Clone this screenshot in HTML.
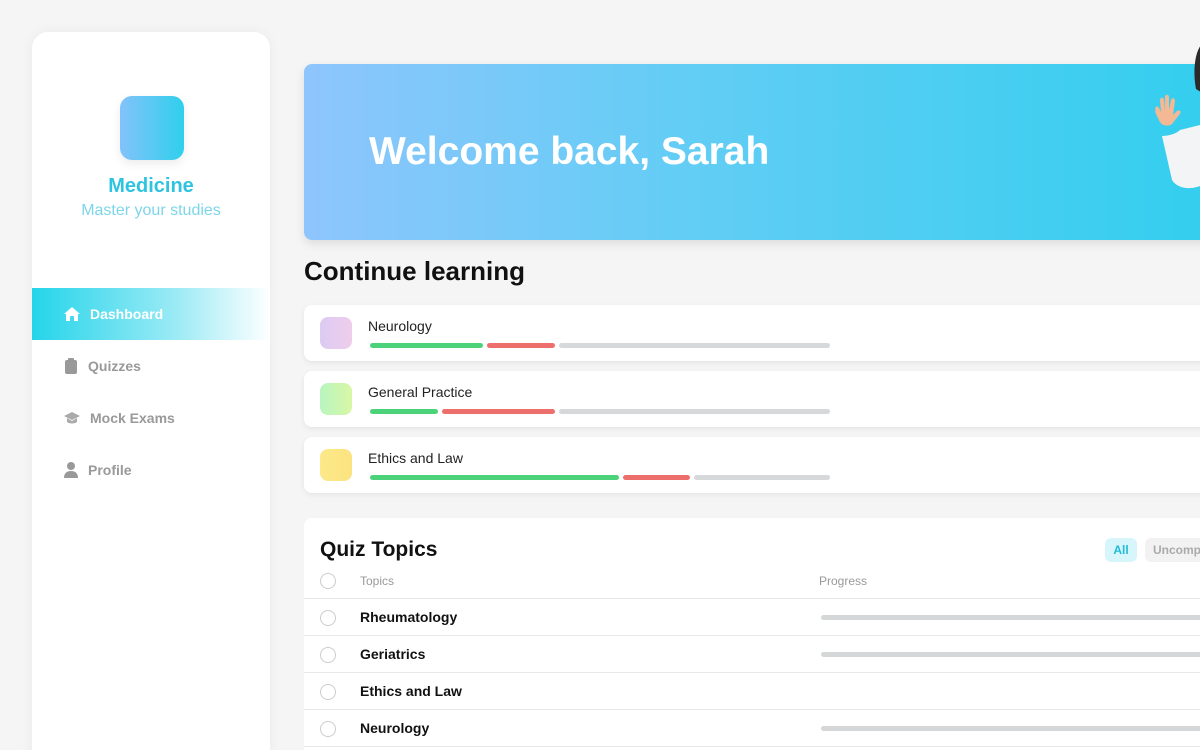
<!DOCTYPE html>
<html><head><style>
*{margin:0;padding:0;box-sizing:border-box}
html,body{width:1200px;height:750px;overflow:hidden}
body{background:#f5f5f5;font-family:"Liberation Sans",sans-serif;position:relative}
.sb{position:absolute;left:32px;top:32px;width:238px;height:740px;background:#fff;border-radius:16px;box-shadow:0 0 12px rgba(0,0,0,.05)}
.logo{position:absolute;left:88px;top:64px;width:64px;height:64px;border-radius:12px;background:linear-gradient(90deg,#83c2fa,#2fd0ec);box-shadow:0 4px 10px rgba(0,0,0,.08)}
.t1{position:absolute;left:0;width:238px;top:143px;text-align:center;color:#2ec4e0;font-weight:bold;font-size:20px}
.t2{position:absolute;left:0;width:238px;top:170px;text-align:center;color:#7dd6e8;font-size:16px}
.nav{position:absolute;left:0;width:238px;height:52px;display:flex;align-items:center;padding-left:32px;font-size:14px;font-weight:bold;color:#999}
.nav svg{margin-right:10px}
.act{background:linear-gradient(90deg,#25d4ea,#9aeaf5 60%,#fff);color:#fff}
.ban{position:absolute;left:304px;top:64px;width:920px;height:176px;border-radius:8px;background:linear-gradient(90deg,#8ec5fc,#64cdf5 40%,#32ceee);box-shadow:0 4px 10px rgba(0,0,0,.1);overflow:visible}
.ban h1{position:absolute;left:65px;top:66px;color:#fff;font-size:39px;font-weight:bold}
h2{position:absolute;left:304px;top:256px;font-size:26px;font-weight:bold;color:#111}
.card{position:absolute;left:304px;width:920px;height:56px;background:#fff;border-radius:8px;box-shadow:0 2px 6px rgba(0,0,0,.07)}
.ic{position:absolute;left:16px;top:12px;width:32px;height:32px;border-radius:8px}
.cn{position:absolute;left:64px;top:13px;font-size:14px;color:#222}
.bar{position:absolute;top:38px;height:5px;border-radius:3px}
.q{position:absolute;left:304px;top:518px;width:920px;height:260px;background:#fff;border-radius:8px}
.q h3{position:absolute;left:16px;top:20px;font-size:21px;font-weight:bold;color:#111}
.row{position:absolute;left:0;width:920px;height:37px;border-bottom:1px solid #e8e8e8}
.rad{position:absolute;left:16px;top:11px;width:16px;height:16px;border:1.5px solid #ccc;border-radius:50%}
.rn{position:absolute;left:56px;top:10px;font-size:14px;font-weight:bold;color:#111}
.pb{position:absolute;left:517px;top:16px;width:400px;height:5px;border-radius:3px;background:#d4d6d8}
</style></head><body>
<div class="sb">
<div class="logo"></div>
<div class="t1">Medicine</div>
<div class="t2">Master your studies</div>
<div class="nav act" style="top:256px"><svg width="16" height="14" viewBox="0 0 16 14"><path d="M8 0L0 7h2v7h4V9h4v5h4V7h2z" fill="#fff"/></svg>Dashboard</div>
<div class="nav" style="top:308px"><svg width="14" height="16" viewBox="0 0 14 16"><rect x="1" y="2" width="12" height="14" rx="2" fill="#999"/><rect x="4" y="0" width="6" height="4" rx="1" fill="#999"/></svg>Quizzes</div>
<div class="nav" style="top:360px"><svg width="16" height="14" viewBox="0 0 16 14"><path d="M8 1L0 5l8 4 8-4zM3 7v4c2 2 8 2 10 0V7L8 10z" fill="#aaa"/></svg>Mock Exams</div>
<div class="nav" style="top:412px"><svg width="14" height="16" viewBox="0 0 14 16"><circle cx="7" cy="4" r="4" fill="#999"/><path d="M0 16c0-5 3-7 7-7s7 2 7 7z" fill="#999"/></svg>Profile</div>
</div>
<div class="ban"><h1>Welcome back, Sarah</h1>
<svg style="position:absolute;left:840px;top:-20px" width="60" height="170" viewBox="0 0 60 170">
<path d="M58 0c-8 8-9 30-6 45l8 5V0z" fill="#2a2a2a"/>
<path d="M12 70c-2-6 0-10 3-6l2 4-1-12c0-3 4-3 4 0l1 10 0-13c0-3 4-3 4 0v13l2-10c1-3 4-2 4 1l-2 14 4-4c3-2 5 1 2 4l-7 9c-4 3-11 2-13-4z" fill="#f5b894"/>
<path d="M18 92c6 0 14-2 18-6l24-6v60c-10 6-26 6-32-4z" fill="#f2f4f6"/>
</svg>
</div>
<h2>Continue learning</h2>
<div class="card" style="top:305px"><div class="ic" style="background:linear-gradient(90deg,#dccbf3,#efcdec)"></div><div class="cn">Neurology</div>
<div class="bar" style="left:66px;width:113px;background:#4cd37a"></div><div class="bar" style="left:183px;width:68px;background:#ec6f6c"></div><div class="bar" style="left:255px;width:271px;background:#d6d8da"></div></div>
<div class="card" style="top:371px"><div class="ic" style="background:linear-gradient(90deg,#b8f5c0,#d9f7a5)"></div><div class="cn">General Practice</div>
<div class="bar" style="left:66px;width:68px;background:#4cd37a"></div><div class="bar" style="left:138px;width:113px;background:#ec6f6c"></div><div class="bar" style="left:255px;width:271px;background:#d6d8da"></div></div>
<div class="card" style="top:437px"><div class="ic" style="background:linear-gradient(90deg,#fde98a,#fbe380)"></div><div class="cn">Ethics and Law</div>
<div class="bar" style="left:66px;width:249px;background:#4cd37a"></div><div class="bar" style="left:319px;width:67px;background:#ec6f6c"></div><div class="bar" style="left:390px;width:136px;background:#d6d8da"></div></div>
<div class="q"><h3>Quiz Topics</h3>
<div style="position:absolute;left:801px;top:20px;width:32px;height:24px;border-radius:6px;background:#d6f6fb;color:#22bcd8;font-size:12px;font-weight:bold;text-align:center;line-height:24px">All</div>
<div style="position:absolute;left:841px;top:20px;width:90px;height:24px;border-radius:6px;background:#f2f2f2;color:#aaa;font-size:12px;font-weight:bold;line-height:24px;padding-left:8px">Uncompleted</div>
<div class="row" style="top:44px"><div class="rad"></div><div class="rn" style="font-weight:normal;color:#999;font-size:12px;top:12px">Topics</div><div style="position:absolute;left:515px;top:12px;font-size:12px;color:#999">Progress</div></div>
<div class="row" style="top:81px"><div class="rad"></div><div class="rn">Rheumatology</div><div class="pb"></div></div>
<div class="row" style="top:118px"><div class="rad"></div><div class="rn">Geriatrics</div><div class="pb"></div></div>
<div class="row" style="top:155px"><div class="rad"></div><div class="rn">Ethics and Law</div></div>
<div class="row" style="top:192px"><div class="rad"></div><div class="rn">Neurology</div><div class="pb"></div></div>
</div>
</body></html>
